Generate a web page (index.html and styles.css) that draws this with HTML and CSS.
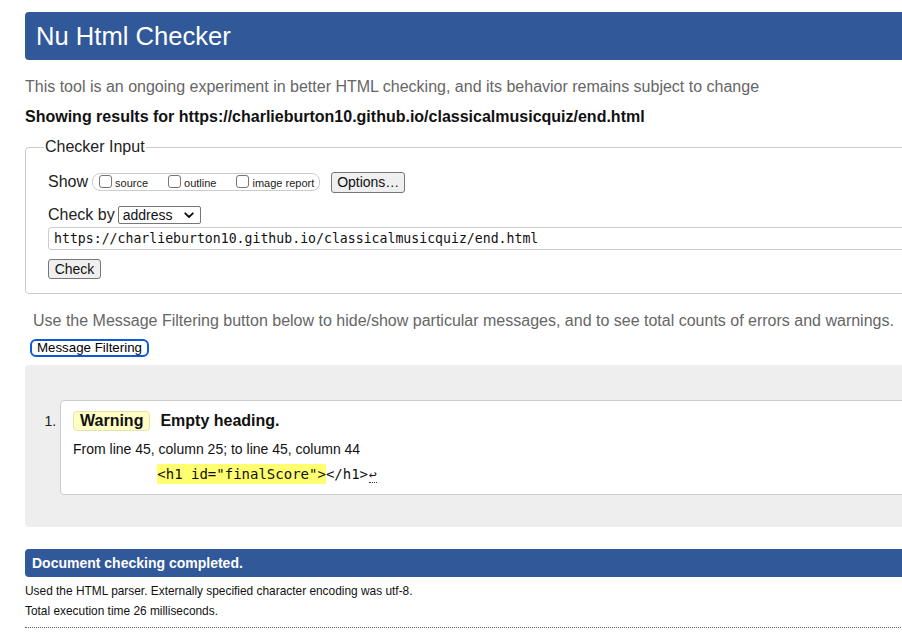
FILE: index.html
```html
<!DOCTYPE html>
<html lang="en">
<head>
<meta charset="utf-8">
<title>Nu Html Checker</title>
<link rel="stylesheet" href="styles.css">
</head>
<body>
<div class="page">
  <h1 class="title">Nu Html Checker</h1>
  <p class="intro">This tool is an ongoing experiment in better HTML checking, and its behavior remains subject to change</p>
  <p class="showing">Showing results for https://charlieburton10.github.io/classicalmusicquiz/end.html</p>

  <fieldset class="input-box">
    <legend class="legend">Checker Input</legend>
    <div class="row show-row">
      <span class="row-label">Show</span>
      <div class="show-group">
        <span class="opt"><span class="cbox"></span><span class="opt-text">source</span></span>
        <span class="opt"><span class="cbox"></span><span class="opt-text">outline</span></span>
        <span class="opt"><span class="cbox"></span><span class="opt-text">image report</span></span>
      </div>
      <span class="btn options-btn">Options…</span>
    </div>
    <div class="row check-row">
      <span class="row-label">Check by</span>
      <span class="select">address
        <svg class="chev" width="10" height="7" viewBox="0 0 10 7"><path d="M1.2 1.3 L5 5 L8.8 1.3" fill="none" stroke="#111" stroke-width="1.8" stroke-linecap="round" stroke-linejoin="round"/></svg>
      </span>
    </div>
    <div class="url-input">https://charlieburton10.github.io/classicalmusicquiz/end.html</div>
    <span class="btn check-btn">Check</span>
  </fieldset>

  <p class="filter-note">Use the Message Filtering button below to hide/show particular messages, and to see total counts of errors and warnings.</p>
  <span class="filter-btn">Message Filtering</span>

  <div class="results">
    <ol class="messages">
      <li class="message">
        <p class="msg-head"><span class="badge">Warning</span><span class="msg-text">Empty heading.</span></p>
        <p class="location">From line 45, column 25; to line 45, column 44</p>
        <p class="extract">          <mark class="hl">&lt;h1 id="finalScore"&gt;</mark>&lt;/h1&gt;<span class="lf">↩</span></p>
      </li>
    </ol>
  </div>

  <h2 class="done">Document checking completed.</h2>
  <p class="stats">Used the HTML parser. Externally specified character encoding was utf-8.</p>
  <p class="stats">Total execution time 26 milliseconds.</p>
  <hr class="dotted">
</div>
</body>
</html>
```
FILE: styles.css
```css
html, body {
  margin: 0;
  padding: 0;
  background: #fff;
  overflow: hidden;
}
body {
  font-family: "Liberation Sans", Arial, Helvetica, sans-serif;
  color: #111;
}
.page {
  margin-left: 25px;
  width: 900px;
}
.title {
  margin: 12px 0 0;
  height: 48px;
  line-height: 48px;
  padding-left: 11px;
  background: #31599a;
  color: #fff;
  font-size: 25.6px;
  font-weight: 400;
  border-radius: 4px;
}
.intro {
  margin: 17px 0 0;
  font-size: 16px;
  line-height: 20px;
  color: #666;
}
.showing {
  margin: 10px 0 0;
  font-size: 16px;
  line-height: 20px;
  font-weight: 700;
  color: #111;
}
.input-box {
  margin: 10px 0 0;
  border: 1px solid #ccc;
  border-radius: 4px;
  padding: 0 0 14px 22px;
  min-width: 0;
}
.legend {
  font-size: 16px;
  line-height: 20px;
  padding: 0 1px;
  margin-left: -4px;
  color: #222;
}
.row {
  display: flex;
  align-items: center;
}
.row-label {
  font-size: 16px;
  color: #222;
}
.show-row {
  margin-top: 13px;
  height: 24px;
}
.show-group {
  margin-left: 4px;
  height: 18px;
  box-sizing: border-box;
  border: 1px solid #ccc;
  border-radius: 8px;
  display: flex;
  align-items: center;
  padding: 0 5px 0 6px;
}
.opt {
  display: flex;
  align-items: center;
}
.opt + .opt {
  margin-left: 20px;
}
.cbox {
  width: 11px;
  height: 11px;
  border: 1px solid #767676;
  border-radius: 3px;
  background: #fff;
  margin-top: -2px;
}
.opt-text {
  font-size: 11px;
  margin-left: 3px;
  padding-top: 2px;
  color: #222;
}
.btn {
  display: inline-flex;
  align-items: center;
  justify-content: center;
  box-sizing: border-box;
  background: #efefef;
  border: 1px solid #767676;
  border-radius: 3px;
  font-size: 14px;
  color: #111;
}
.options-btn {
  margin-left: 11px;
  width: 74px;
  height: 21px;
}
.check-row {
  margin-top: 10px;
  height: 22px;
}
.select {
  margin-left: 3px;
  width: 83px;
  height: 18px;
  box-sizing: border-box;
  border: 1px solid #767676;
  border-radius: 2px;
  font-size: 14px;
  line-height: 16px;
  padding-left: 4px;
  display: flex;
  align-items: center;
  justify-content: space-between;
  padding-right: 6px;
  background: #fff;
}
.chev {
  display: block;
}
.url-input {
  margin-top: 1px;
  width: 880px;
  height: 23px;
  box-sizing: border-box;
  border: 1px solid #ccc;
  border-radius: 3px;
  padding-left: 5px;
  font-family: "DejaVu Sans Mono", monospace;
  font-size: 13.2px;
  line-height: 21px;
  color: #111;
}
.check-btn {
  margin-top: 9px;
  width: 53px;
  height: 20px;
}
.filter-note {
  margin: 17px 0 0;
  padding-left: 8px;
  font-size: 16px;
  line-height: 20px;
  color: #666;
}
.filter-btn {
  display: inline-block;
  margin: 8px 0 0 5px;
  height: 18px;
  box-sizing: border-box;
  border: 2px solid #0b5bd8;
  border-radius: 6px;
  padding: 0 5px 0 5px;
  font-size: 13.3px;
  line-height: 14px;
  color: #000;
  background: #fff;
}
.results {
  margin-top: 8px;
  background: #eee;
  border-radius: 4px;
  padding: 35px 0 32px;
}
.messages {
  margin: 0;
  padding-left: 35px;
  font-size: 14px;
}
.messages li::marker {
  color: #222;
}
.message {
  background: #fff;
  border: 1px solid #ccc;
  border-radius: 4px;
  padding: 10px 12px 9px;
}
.msg-head {
  margin: 0;
  display: flex;
  align-items: center;
  height: 20px;
}
.badge {
  display: inline-block;
  height: 20px;
  box-sizing: border-box;
  line-height: 18px;
  padding: 0 6px;
  background: #ffffc4;
  border: 1px solid #e3e3b0;
  border-radius: 4px;
  font-size: 16px;
  font-weight: 700;
  color: #111;
}
.msg-text {
  margin-left: 10px;
  font-size: 16px;
  font-weight: 700;
  color: #111;
}
.location {
  margin: 8px 0 0;
  font-size: 14px;
  line-height: 20px;
  color: #111;
}
.extract {
  margin: 5px 0 0;
  white-space: pre;
  font-family: "DejaVu Sans Mono", monospace;
  font-size: 14px;
  line-height: 20px;
  color: #111;
}
.hl {
  background: #ffff70;
  color: #111;
  padding: 2px 0;
}
.lf {
  font-size: 13px;
  border-bottom: 1px dotted #333;
  margin-left: 1px;
}
.done {
  margin: 22px 0 0;
  height: 28px;
  line-height: 28px;
  padding-left: 7px;
  background: #31599a;
  color: #fff;
  font-size: 14px;
  font-weight: 700;
  border-radius: 4px;
}
.stats {
  margin: 0;
  font-size: 11.9px;
  line-height: 20px;
  color: #111;
}
.done + .stats {
  margin-top: 4px;
}
.dotted {
  margin: 6px 0 0;
  border: 0;
  border-top: 1px dotted #666;
  height: 0;
}
```
